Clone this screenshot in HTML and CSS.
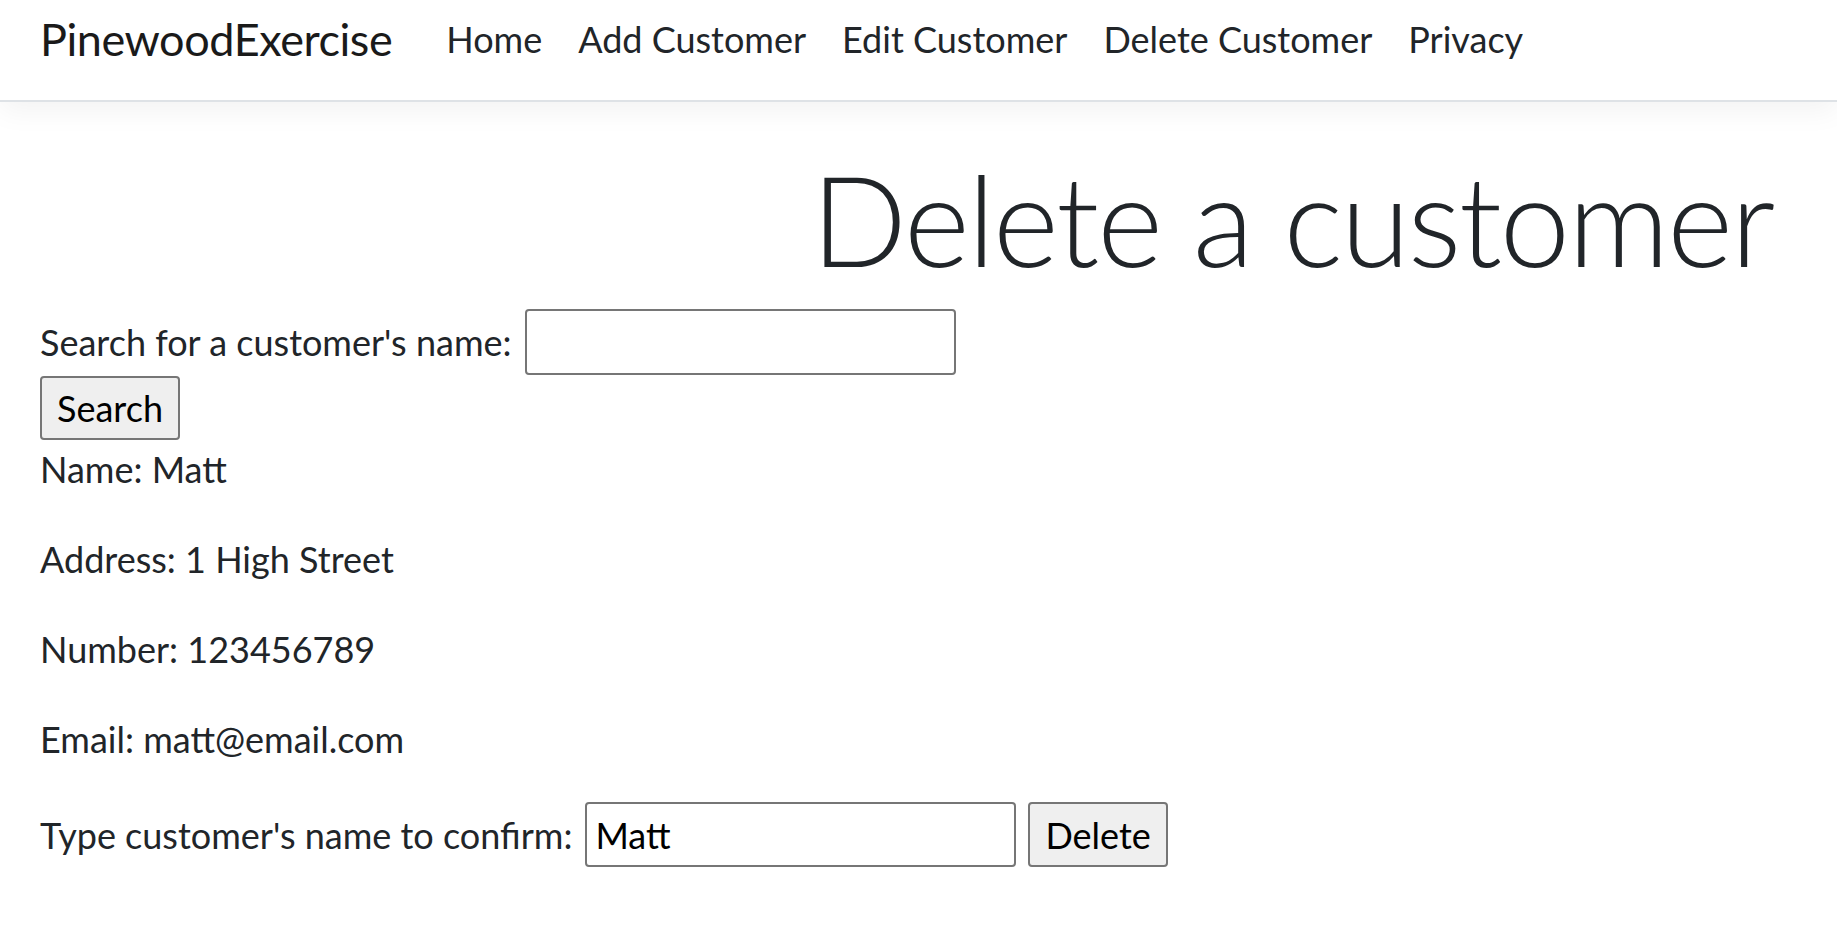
FILE: index.html
```html
<!DOCTYPE html>
<html lang="en">
<head>
<meta charset="utf-8">
<title>Delete Customer - PinewoodExercise</title>
<link rel="stylesheet" href="styles.css">
</head>
<body>
<header class="navbar">
  <div class="nav-inner">
    <a class="brand" href="#">PinewoodExercise</a>
    <ul class="nav-links">
      <li><a class="nav-link" href="#">Home</a></li>
      <li><a class="nav-link" href="#">Add Customer</a></li>
      <li><a class="nav-link" href="#">Edit Customer</a></li>
      <li><a class="nav-link" href="#">Delete Customer</a></li>
      <li><a class="nav-link" href="#">Privacy</a></li>
    </ul>
  </div>
</header>
<main class="container">
  <h1 class="display-title">Delete a customer</h1>
  <form class="search-form">
    <div class="field-row">
      <label class="field-label" for="search">Search for a customer's name:</label>
      <input class="text-input" id="search" type="text">
    </div>
    <button class="btn search-btn" type="button">Search</button>
  </form>
  <p class="detail">Name: Matt</p>
  <p class="detail">Address: 1 High Street</p>
  <p class="detail">Number: 123456789</p>
  <p class="detail">Email: matt@email.com</p>
  <form class="confirm-form">
    <label class="field-label" for="confirm">Type customer's name to confirm:</label>
    <input class="text-input" id="confirm" type="text" value="Matt">
    <button class="btn" type="button">Delete</button>
  </form>
</main>
</body>
</html>
```
FILE: styles.css
```css
* { box-sizing: border-box; }

html, body {
  margin: 0;
  padding: 0;
  background: #fff;
}

body {
  font-family: Lato, "Open Sans", sans-serif;
  font-size: 36px;
  line-height: 54px;
  color: #212529;
}

.navbar {
  height: 102px;
  border-bottom: 2px solid #dee2e6;
  box-shadow: 0 9px 27px rgba(0, 0, 0, 0.05);
  background: #fff;
}

.nav-inner {
  height: 100%;
  display: flex;
  align-items: flex-start;
  padding: 9px 40px 0;
}

.brand {
  font-size: 45px;
  line-height: 60px;
  letter-spacing: -0.45px;
  color: #1a1a1a;
  text-decoration: none;
  margin-right: 36px;
}

.nav-links {
  display: flex;
  list-style: none;
  margin: 3px 0 0;
  padding: 0;
}

.nav-link {
  display: block;
  padding: 0 18px;
  color: #212529;
  text-decoration: none;
  font-size: 36px;
  line-height: 54px;
}

.container {
  padding: 0 64px 0 40px;
}

.display-title {
  margin: 36px 0 15px;
  padding-top: 5px;
  font-size: 126px;
  font-weight: 300;
  line-height: 151px;
  letter-spacing: -2.2px;
  text-align: right;
  color: #212529;
}

.field-row {
  display: flex;
  align-items: center;
  gap: 13px;
}

.field-label {
  display: block;
}

.text-input {
  width: 431px;
  height: 66px;
  border: 2px solid #767676;
  border-radius: 4px;
  padding: 0 8px;
  font-family: Lato, "Open Sans", sans-serif;
  font-size: 36px;
  color: #000;
  background: #fff;
}

.btn {
  display: block;
  height: 64px;
  padding: 0 15px;
  border: 2px solid #767676;
  border-radius: 4px;
  background: #efefef;
  font-family: Lato, "Open Sans", sans-serif;
  font-size: 36px;
  color: #000;
}

.search-form {
  margin: 0 0 2px;
}

.search-btn {
  margin-top: 1px;
}

.detail {
  margin: 0 0 36px;
}

.confirm-form {
  display: flex;
  align-items: center;
  gap: 13px;
  margin: 0;
}

.confirm-form .text-input {
  height: 65px;
}

.confirm-form .btn {
  height: 65px;
  margin-left: -1px;
}
```
